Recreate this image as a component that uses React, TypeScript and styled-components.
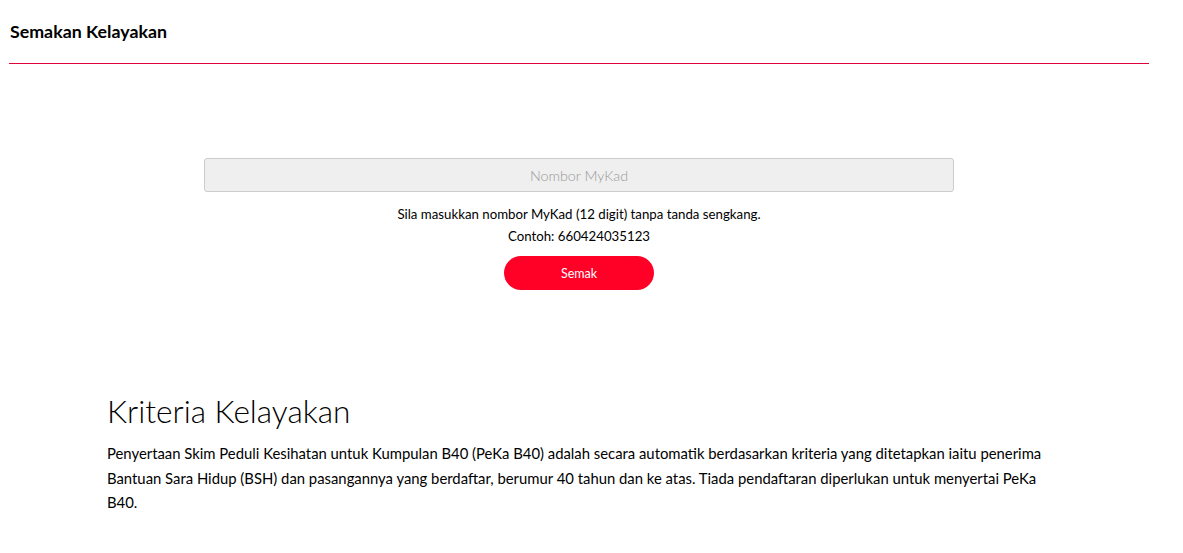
import React from "react";
import styled, { createGlobalStyle } from "styled-components";

const GlobalStyle = createGlobalStyle`
  html, body {
    margin: 0;
    padding: 0;
    background: #fff;
    color: #000;
    font-family: Lato, "Open Sans", "Liberation Sans", Arial, sans-serif;
    font-weight: 400;
  }
`;

const Page = styled.div`
  width: 1140px;
  padding-left: 9px;
`;

const Header = styled.div`
  padding: 21px 0 22px 1px;
  border-bottom: 1px solid #e0003a;
  font-weight: 700;
  font-size: 17.8px;
  line-height: 20px;
`;

const Form = styled.div`
  display: flex;
  flex-direction: column;
  align-items: center;
  padding-top: 94px;
`;

const Input = styled.input`
  box-sizing: border-box;
  width: 750px;
  height: 34px;
  background: #efefef;
  border: 1px solid #cccccc;
  border-radius: 3px;
  text-align: center;
  font-family: inherit;
  font-weight: 300;
  font-size: 14.3px;
  color: #333;
  outline: none;

  &::placeholder {
    color: #999;
  }
`;

const Help = styled.p`
  margin: 11px 0 0;
  text-align: center;
  font-size: 13.25px;
  line-height: 22px;
`;

const Button = styled.button`
  margin-top: 9px;
  width: 150px;
  height: 34px;
  border: none;
  border-radius: 17px;
  background: #ff0027;
  color: #fff;
  font-family: inherit;
  font-weight: 400;
  font-size: 12.5px;
  cursor: pointer;
`;

const Criteria = styled.section`
  width: 945px;
  padding: 99px 0 0 98px;
`;

const Title = styled.h2`
  margin: 0;
  font-weight: 300;
  font-size: 31.6px;
  line-height: 44px;
`;

const Text = styled.p`
  margin: 8px 0 0;
  font-size: 14.85px;
  line-height: 24.5px;
`;

export default function App() {
  return (
    <>
      <GlobalStyle />
      <Page>
        <Header>Semakan Kelayakan</Header>
        <Form>
          <Input placeholder="Nombor MyKad" />
          <Help>
            Sila masukkan nombor MyKad (12 digit) tanpa tanda sengkang.
            <br />
            Contoh: 660424035123
          </Help>
          <Button>Semak</Button>
        </Form>
        <Criteria>
          <Title>Kriteria Kelayakan</Title>
          <Text>
            Penyertaan Skim Peduli Kesihatan untuk Kumpulan B40 (PeKa B40) adalah secara
            automatik berdasarkan kriteria yang ditetapkan iaitu penerima Bantuan Sara Hidup
            (BSH) dan pasangannya yang berdaftar, berumur 40 tahun dan ke atas. Tiada
            pendaftaran diperlukan untuk menyertai PeKa B40.
          </Text>
        </Criteria>
      </Page>
    </>
  );
}
